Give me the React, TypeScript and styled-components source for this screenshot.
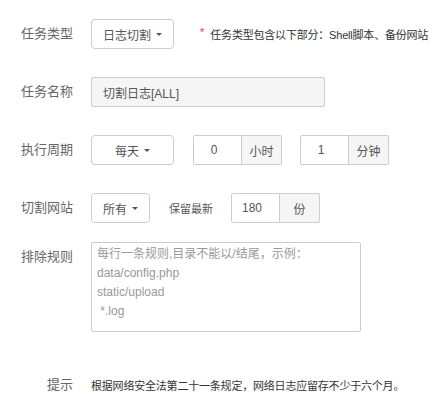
import * as React from "react"
import styled, { createGlobalStyle } from "styled-components"

const GlobalStyle = createGlobalStyle`
  html, body {
    margin: 0;
    padding: 0;
    background: #fff;
    overflow: hidden;
  }
  body {
    font-family: "Liberation Sans", "Noto Sans CJK SC", sans-serif;
    color: #555;
  }
`

const Form = styled.div`
  padding-top: 19px;
  width: 434px;
`

const Row = styled.div<{ $mb?: number; $top?: boolean }>`
  display: flex;
  align-items: ${(p) => (p.$top ? "flex-start" : "center")};
  margin-bottom: ${(p) => p.$mb ?? 28}px;
  white-space: nowrap;
`

const Label = styled.div`
  flex: none;
  width: 73px;
  margin-right: 18px;
  text-align: right;
  font-size: 13px;
  line-height: 30px;
  color: #666;
`

const SelectButton = styled.div<{ $width?: number }>`
  box-sizing: border-box;
  height: 30px;
  ${(p) => (p.$width ? `width: ${p.$width}px;` : "")}
  padding: 0 11px;
  display: inline-flex;
  align-items: center;
  justify-content: center;
  gap: 5px;
  border: 1px solid #ccc;
  border-radius: 4px;
  background: #fff;
  font-size: 12px;
  color: #555;
`

const Caret = styled.span`
  width: 0;
  height: 0;
  margin-top: 1px;
  border-top: 3.5px solid #555;
  border-left: 3.5px solid transparent;
  border-right: 3.5px solid transparent;
`

const Star = styled.span`
  margin-left: 26px;
  margin-right: 6px;
  color: #f33;
  font-size: 11px;
  position: relative;
  top: -2px;
`

const Note = styled.span<{ $color?: string }>`
  font-size: 11px;
  letter-spacing: -0.2px;
  color: ${(p) => p.$color ?? "#333"};
`

const TextInput = styled.input`
  box-sizing: border-box;
  width: 234px;
  height: 30px;
  padding: 0 11px;
  border: 1px solid #ccc;
  border-radius: 2px;
  background: #f5f5f5;
  font-family: inherit;
  font-size: 12px;
  color: #555;
  outline: none;
`

const Group = styled.div<{ $ml?: number }>`
  display: inline-flex;
  margin-left: ${(p) => p.$ml ?? 0}px;
`

const GroupInput = styled.input`
  box-sizing: border-box;
  width: 49px;
  height: 30px;
  padding: 0 7px 0 0;
  border: 1px solid #ccc;
  border-radius: 2px 0 0 2px;
  text-align: center;
  font-family: inherit;
  font-size: 12px;
  color: #555;
  outline: none;
`

const Addon = styled.span`
  box-sizing: border-box;
  width: 40px;
  height: 30px;
  display: flex;
  align-items: center;
  justify-content: center;
  border: 1px solid #ccc;
  border-left: none;
  border-radius: 0 2px 2px 0;
  background: #f5f5f5;
  font-size: 12px;
  color: #555;
`

const Keep = styled.span`
  margin: 0 18px 0 19px;
  font-size: 11px;
  color: #555;
`

const Rules = styled.textarea`
  box-sizing: border-box;
  width: 270px;
  height: 90px;
  padding: 2px 5px;
  border: 1px solid #ccc;
  border-radius: 2px;
  resize: none;
  font-family: inherit;
  font-size: 12px;
  line-height: 19px;
  color: #555;
  outline: none;
  &::placeholder {
    color: #999;
  }
`

const rulesHint = "每行一条规则,目录不能以/结尾，示例：\ndata/config.php\nstatic/upload\n *.log"

export default function App() {
  const [hour, setHour] = React.useState("0")
  const [minute, setMinute] = React.useState("1")
  const [keep, setKeep] = React.useState("180")

  return (
    <>
      <GlobalStyle />
      <Form>
        <Row>
          <Label>任务类型</Label>
          <SelectButton>
            日志切割<Caret />
          </SelectButton>
          <Star>*</Star>
          <Note>任务类型包含以下部分：Shell脚本、备份网站</Note>
        </Row>

        <Row>
          <Label>任务名称</Label>
          <TextInput value="切割日志[ALL]" readOnly />
        </Row>

        <Row>
          <Label>执行周期</Label>
          <SelectButton $width={83}>
            每天<Caret />
          </SelectButton>
          <Group $ml={19}>
            <GroupInput value={hour} onChange={(e) => setHour(e.target.value)} />
            <Addon>小时</Addon>
          </Group>
          <Group $ml={18}>
            <GroupInput value={minute} onChange={(e) => setMinute(e.target.value)} />
            <Addon>分钟</Addon>
          </Group>
        </Row>

        <Row $mb={19}>
          <Label>切割网站</Label>
          <SelectButton>
            所有<Caret />
          </SelectButton>
          <Keep>保留最新</Keep>
          <Group>
            <GroupInput value={keep} onChange={(e) => setKeep(e.target.value)} />
            <Addon>份</Addon>
          </Group>
        </Row>

        <Row $top $mb={38}>
          <Label>排除规则</Label>
          <Rules placeholder={rulesHint} />
        </Row>

        <Row>
          <Label>提示</Label>
          <Note>根据网络安全法第二十一条规定，网络日志应留存不少于六个月。</Note>
        </Row>
      </Form>
    </>
  )
}
